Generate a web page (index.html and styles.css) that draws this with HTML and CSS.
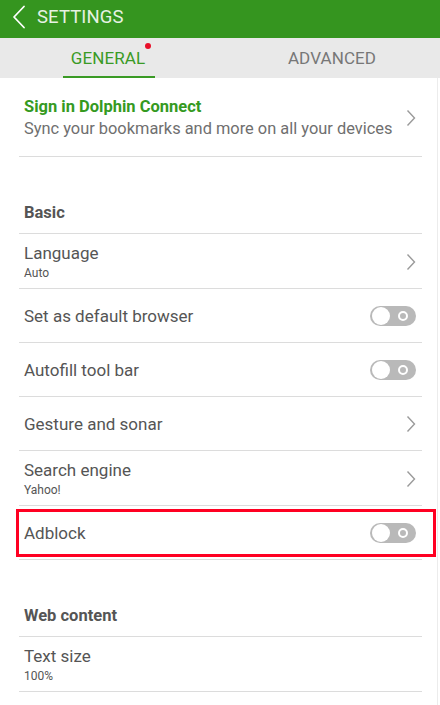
FILE: index.html
```html
<!DOCTYPE html>
<html>
<head>
<meta charset="utf-8">
<link rel="stylesheet" href="styles.css">
</head>
<body>
<div class="app">
  <header class="topbar">
    <svg class="back" width="14" height="24" viewBox="0 0 14 24"><path d="M12 1.5 L2 12 L12 22.5" fill="none" stroke="#fff" stroke-width="1.8" stroke-linecap="round" stroke-linejoin="round"/></svg>
    <span class="title">SETTINGS</span>
  </header>
  <nav class="tabs">
    <div class="tab active"><span class="tab-label">GENERAL<span class="dot"></span></span></div>
    <div class="tab"><span class="tab-label">ADVANCED</span></div>
  </nav>
  <main class="content">
    <div class="list">
      <div class="row signin">
        <div class="texts">
          <div class="signin-title">Sign in Dolphin Connect</div>
          <div class="signin-sub">Sync your bookmarks and more on all your devices</div>
        </div>
        <svg class="chev" width="10" height="18" viewBox="0 0 10 18"><path d="M1.5 1.5 L8.5 9 L1.5 16.5" fill="none" stroke="#9a9a9a" stroke-width="1.4"/></svg>
      </div>

      <div class="section">Basic</div>
      <div class="row two">
        <div class="texts"><div class="label">Language</div><div class="sub">Auto</div></div>
        <svg class="chev" width="10" height="18" viewBox="0 0 10 18"><path d="M1.5 1.5 L8.5 9 L1.5 16.5" fill="none" stroke="#9a9a9a" stroke-width="1.4"/></svg>
      </div>
      <div class="row">
        <div class="label">Set as default browser</div>
        <span class="toggle"><span class="knob"></span><span class="ring"></span></span>
      </div>
      <div class="row">
        <div class="label">Autofill tool bar</div>
        <span class="toggle"><span class="knob"></span><span class="ring"></span></span>
      </div>
      <div class="row">
        <div class="label">Gesture and sonar</div>
        <svg class="chev" width="10" height="18" viewBox="0 0 10 18"><path d="M1.5 1.5 L8.5 9 L1.5 16.5" fill="none" stroke="#9a9a9a" stroke-width="1.4"/></svg>
      </div>
      <div class="row two">
        <div class="texts"><div class="label">Search engine</div><div class="sub">Yahoo!</div></div>
        <svg class="chev" width="10" height="18" viewBox="0 0 10 18"><path d="M1.5 1.5 L8.5 9 L1.5 16.5" fill="none" stroke="#9a9a9a" stroke-width="1.4"/></svg>
      </div>
      <div class="row highlighted">
        <div class="label">Adblock</div>
        <span class="toggle"><span class="knob"></span><span class="ring"></span></span>
        <span class="highlight-box"></span>
      </div>

      <div class="section">Web content</div>
      <div class="row two">
        <div class="texts"><div class="label">Text size</div><div class="sub">100%</div></div>
      </div>
    </div>
  </main>
</div>
</body>
</html>
```
FILE: styles.css
```css
* { box-sizing: border-box; }
html, body { margin: 0; padding: 0; }
body {
  width: 440px;
  height: 705px;
  overflow: hidden;
  background: #ffffff;
  font-family: Roboto, "Noto Sans", "Liberation Sans", sans-serif;
}
.app { display: flex; flex-direction: column; height: 705px; }
.topbar {
  height: 38px;
  background: #35951f;
  display: flex;
  align-items: center;
  padding-left: 12px;
  flex-shrink: 0;
}
.back { margin-top: -4px; }
.title {
  color: #e6f2e3;
  font-size: 18.5px;
  margin-left: 11px;
  margin-top: -4px;
  letter-spacing: 0.1px;
}
.tabs {
  height: 40px;
  background: #e9e9e9;
  display: flex;
  flex-shrink: 0;
}
.tab {
  flex: 1;
  display: flex;
  justify-content: center;
  align-items: center;
  position: relative;
}
.tab:first-child { padding-right: 4px; }
.tab:last-child { padding-left: 4px; }
.tab-label {
  font-size: 17px;
  color: #777777;
  position: relative;
  letter-spacing: 0.1px;
}
.tab.active .tab-label { color: #3a9a25; }
.tab.active::after {
  content: "";
  position: absolute;
  left: 63px;
  width: 92px;
  bottom: 0;
  height: 2px;
  background: #3a9a25;
}
.dot {
  position: absolute;
  right: -6px;
  top: -5px;
  width: 6px;
  height: 6px;
  border-radius: 50%;
  background: #e8102a;
}
.content {
  flex: 1;
  width: 438px;
  border-right: 1px solid #ececec;
}
.list { padding: 0 15px 0 19px; }
.row {
  height: 54px;
  border-bottom: 1px solid #dcdcdc;
  display: flex;
  align-items: center;
  justify-content: space-between;
  padding: 0 6px 0 5px;
  position: relative;
}
.row.two { height: 55px; padding-top: 2px; }
.row.signin { height: 79px; padding-top: 2px; }
.texts { display: flex; flex-direction: column; }
.signin-title {
  color: #359a1f;
  font-weight: 700;
  font-size: 16.5px;
  line-height: 22px;
}
.signin-sub {
  color: #6f6f6f;
  font-size: 16.4px;
  line-height: 22px;
}
.label {
  color: #555555;
  font-size: 17px;
  line-height: 22px;
}
.sub {
  color: #555555;
  font-size: 12px;
  line-height: 18px;
}
.chev { flex-shrink: 0; }
.section {
  height: 77px;
  border-bottom: 1px solid #dcdcdc;
  display: flex;
  align-items: flex-end;
  padding: 0 0 11px 5px;
  font-weight: 700;
  color: #555555;
  font-size: 16.5px;
}
.toggle {
  width: 46px;
  height: 20px;
  border-radius: 10px;
  background: #b9b9b9;
  position: relative;
  flex-shrink: 0;
}
.knob {
  position: absolute;
  left: 2px;
  top: 1px;
  width: 18px;
  height: 18px;
  border-radius: 50%;
  background: #ffffff;
}
.ring {
  position: absolute;
  right: 8px;
  top: 5px;
  width: 10px;
  height: 10px;
  border-radius: 50%;
  border: 2px solid #ffffff;
  background: #b9b9b9;
}
.highlight-box {
  position: absolute;
  left: -3px;
  right: -14px;
  top: 3px;
  bottom: 2px;
  border: 3px solid #ff0022;
  pointer-events: none;
}
```
